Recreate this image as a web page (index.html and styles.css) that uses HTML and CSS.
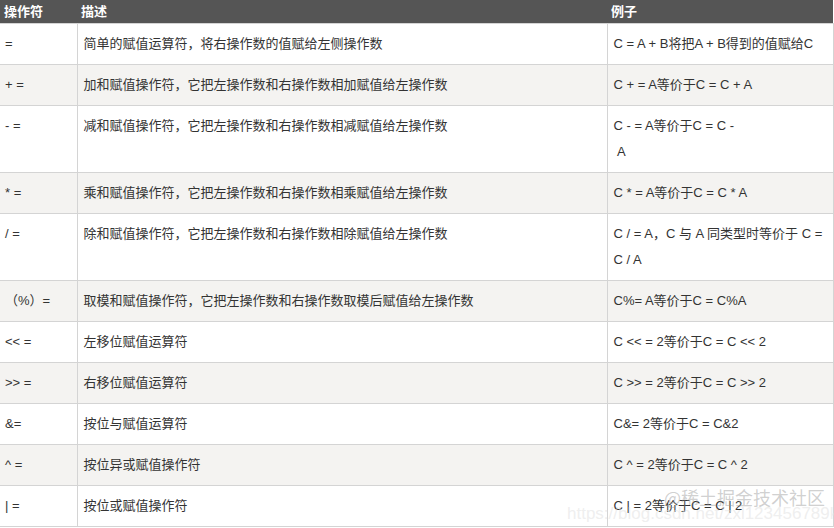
FILE: index.html
```html
<!DOCTYPE html>
<html lang="zh">
<head>
<meta charset="utf-8">
<title>赋值运算符</title>
<link rel="stylesheet" href="styles.css">
</head>
<body>
<div class="page">
<table class="ops">
<colgroup><col class="c1"><col class="c2"><col class="c3"></colgroup>
<thead>
<tr><th>操作符</th><th>描述</th><th>例子</th></tr>
</thead>
<tbody>
<tr><td>=</td><td>简单的赋值运算符，将右操作数的值赋给左侧操作数</td><td>C = A + B将把A + B得到的值赋给C</td></tr>
<tr class="alt"><td>+ =</td><td>加和赋值操作符，它把左操作数和右操作数相加赋值给左操作数</td><td>C + = A等价于C = C + A</td></tr>
<tr class="tall"><td>- =</td><td>减和赋值操作符，它把左操作数和右操作数相减赋值给左操作数</td><td>C - = A等价于C = C -<br>&nbsp;A</td></tr>
<tr class="alt"><td>* =</td><td>乘和赋值操作符，它把左操作数和右操作数相乘赋值给左操作数</td><td>C * = A等价于C = C * A</td></tr>
<tr class="tall"><td>/ =</td><td>除和赋值操作符，它把左操作数和右操作数相除赋值给左操作数</td><td>C / = A，C 与 A 同类型时等价于 C =<br>C / A</td></tr>
<tr class="alt"><td>（%）=</td><td>取模和赋值操作符，它把左操作数和右操作数取模后赋值给左操作数</td><td>C%= A等价于C = C%A</td></tr>
<tr><td>&lt;&lt; =</td><td>左移位赋值运算符</td><td>C &lt;&lt; = 2等价于C = C &lt;&lt; 2</td></tr>
<tr class="alt"><td>&gt;&gt; =</td><td>右移位赋值运算符</td><td>C &gt;&gt; = 2等价于C = C &gt;&gt; 2</td></tr>
<tr><td>&amp;=</td><td>按位与赋值运算符</td><td>C&amp;= 2等价于C = C&amp;2</td></tr>
<tr class="alt"><td>^ =</td><td>按位异或赋值操作符</td><td>C ^ = 2等价于C = C ^ 2</td></tr>
<tr><td>| =</td><td>按位或赋值操作符</td><td>C | = 2等价于C = C | 2</td></tr>
</tbody>
</table>
<div class="wm wm-site">@稀土掘金技术社区</div>
<div class="wm wm-url">https://blog.csdn.net/zxl123456789kk</div>
</div>
</body>
</html>
```
FILE: styles.css
```css
html, body {
  margin: 0;
  padding: 0;
  background: #ffffff;
}
.page {
  position: relative;
  width: 834px;
  height: 528px;
  overflow: hidden;
}
.ops {
  border-collapse: collapse;
  width: 833px;
  table-layout: fixed;
  font-family: "Liberation Sans", "Noto Sans CJK SC", sans-serif;
  font-size: 13px;
  color: #333333;
}
.c1 { width: 77px; }
.c2 { width: 530px; }
.c3 { width: 226px; }
.ops th {
  background: #555555;
  color: #ffffff;
  font-weight: bold;
  text-align: left;
  height: 23px;
  padding: 0 4px;
  line-height: 23px;
  border: none;
}
.ops td {
  border: 1px solid #d4d4d4;
  border-left: none;
  padding: 7px 6px 7px;
  line-height: 26px;
  height: 26px;
  vertical-align: top;
}
.ops td:first-child {
  padding-left: 5px;
}
.ops td + td {
  border-left: 1px solid #d4d4d4;
}
.ops tr.alt td {
  background: #f4f3f1;
}
.wm {
  position: absolute;
  white-space: nowrap;
  pointer-events: none;
}
.wm-site {
  left: 664px;
  top: 484px;
  font-family: "Noto Sans CJK SC", sans-serif;
  font-size: 18px;
  color: rgba(150, 150, 150, 0.45);
}
.wm-url {
  left: 567px;
  top: 504px;
  font-family: "Liberation Sans", sans-serif;
  font-size: 17px;
  color: rgba(225, 225, 225, 0.55);
}
```
